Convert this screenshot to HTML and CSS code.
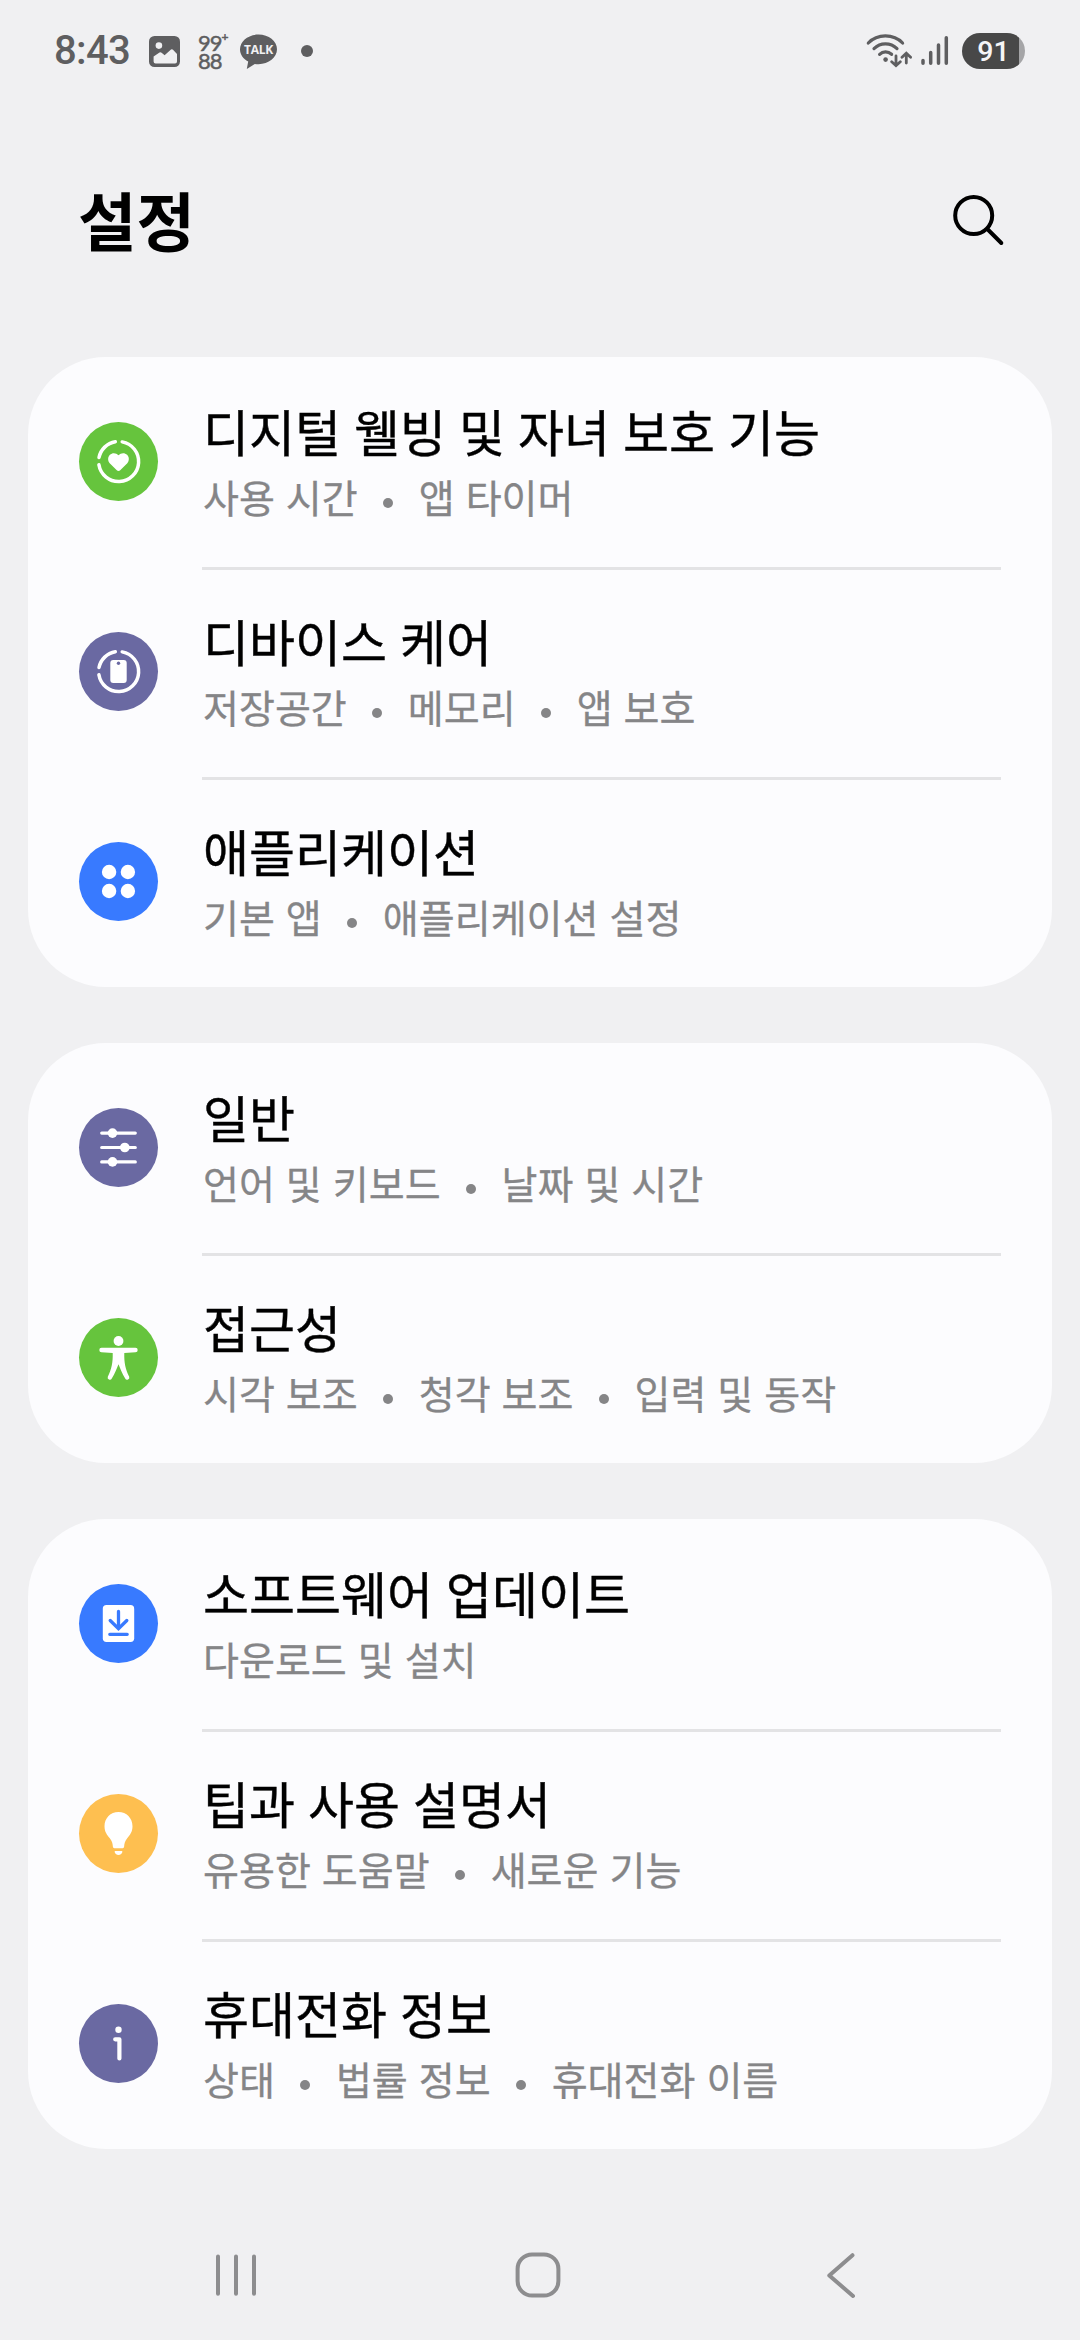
FILE: index.html
```html
<!DOCTYPE html>
<html lang="ko">
<head>
<meta charset="utf-8">
<title>설정</title>
<link rel="stylesheet" href="styles.css">
</head>
<body>
<div class="screen">
  <div class="status">
    <div class="status-left">
      <span class="time">8:43</span>
      <svg class="st-image" viewBox="0 0 31 31" width="31" height="31"><rect width="31" height="31" rx="5.5" fill="#5e5e60"/><circle cx="9.9" cy="9.6" r="3.3" fill="#f0f0f2"/><path d="M4.6 20.5 L10.5 16.4 Q11.6 15.8 12.6 16.7 L15.6 19.3 L22 13.6 Q23 12.8 24 13.7 L28 18 V25.5 Q28 27.6 26 27.6 H6.6 Q4.6 27.6 4.6 25.5Z" fill="#f0f0f2"/></svg>
      <span class="st-count"><span class="count-top"><span>99</span><span class="plus">+</span></span><span>88</span></span>
      <span class="st-talk"><svg viewBox="0 0 37 36" width="37" height="36"><path d="M18.5.5C8.3.5 0 7 0 15.3c0 5.3 3.3 9.7 8.2 12.3L6.8 35l8-5c1.2.1 2.4.2 3.7.2C28.7 30.2 37 23.5 37 15.3S28.7.5 18.5.5Z" fill="#5e5e60"/></svg><span>TALK</span></span>
      <span class="st-dot"></span>
    </div>
    <div class="status-right">
      <svg class="st-wifi" viewBox="866 32 46 38" width="46" height="38" fill="none" stroke="#5e5e60" stroke-width="3.2" stroke-linecap="round"><path d="M868.3 43C873 38.2 879 35.9 885.4 35.9S898 38.2 902.6 43M874 48.6C877.2 45.4 881 43.8 885.4 43.8S893.8 45.4 897 48.6M879.6 54.3C883 51 888 51 891.6 54.3"/><path stroke-width="2.8" d="M896 56V65M891.7 61.7L896 65.7L900.3 61.7M906.300 63V53.5M902 57.2L906.300 53.2L910.600 57.2"/><circle cx="885.6" cy="59.6" r="2.3" fill="#5e5e60" stroke="none"/></svg>
      <svg class="st-signal" viewBox="921 36 28 30" width="28" height="30" stroke="#5e5e60" stroke-width="3.5" stroke-linecap="round"><path d="M923 60.5V63.3M930.7 52.5V63.3M938.5 45V63.3M946.3 37.8V63.3"/></svg>
      <span class="battery">91</span>
    </div>
  </div>

  <header class="header">
    <h1>설정</h1>
    <svg viewBox="950 192 56 56" width="56" height="56" fill="none" stroke="#000" stroke-width="4" stroke-linecap="round"><circle cx="973.7" cy="215.5" r="18.5"/><path d="M987.3 229L1001.3 243"/></svg>
  </header>

  <main class="groups">
    <section class="card">
      <div class="row">
        <svg class="icon green" viewBox="-39.5 -39.5 79 79"><path class="line ring" d="M-19.500-4A20 20 0 0 1-3.200-19.700M3.700-19.600A20 20 0 1 1-19.600 3.300"/><path class="solid" d="M0 9.600C-.7 9.600-1.200 9.300-1.700 8.800L-8.800 1.800C-10.900-.6-10.900-4.500-8.600-6.700-6.200-9-2.400-8.800 0-6.200 2.400-8.800 6.200-9 8.600-6.700 10.900-4.500 10.900-.6 8.800 1.800L1.700 8.800C1.200 9.300.7 9.600 0 9.600Z"/></svg>
        <div class="text"><h2>디지털 웰빙 및 자녀 보호 기능</h2><p><span>사용 시간</span><i></i><span>앱 타이머</span></p></div>
      </div>
      <div class="row">
        <svg class="icon purple" viewBox="-39.5 -39.5 79 79"><path class="line ring" d="M-19.500-4A20 20 0 0 1-3.200-19.700M3.700-19.600A20 20 0 1 1-19.600 3.300"/><rect class="solid" x="-8.200" y="-11.500" width="16.400" height="23" rx="3"/><circle cx="0" cy="-8.200" r="1.700" fill="#6a69a2"/></svg>
        <div class="text"><h2>디바이스 케어</h2><p><span>저장공간</span><i></i><span>메모리</span><i></i><span>앱 보호</span></p></div>
      </div>
      <div class="row">
        <svg class="icon blue" viewBox="-39.5 -39.5 79 79"><g class="solid"><circle cx="-9.4" cy="-9.5" r="7.2"/><circle cx="9.4" cy="-9.5" r="7.2"/><circle cx="-9.4" cy="9.5" r="7.2"/><circle cx="9.4" cy="9.5" r="7.2"/></g></svg>
        <div class="text"><h2>애플리케이션</h2><p><span>기본 앱</span><i></i><span>애플리케이션 설정</span></p></div>
      </div>
    </section>

    <section class="card">
      <div class="row">
        <svg class="icon purple" viewBox="-39.5 -39.5 79 79"><path class="line" d="M-16.800-14.400H16.800M-16.800 0H16.800M-16.800 14.400H16.800"/><g class="solid"><circle cx="-6" cy="-14.4" r="4.8"/><circle cx="6.3" cy="0" r="4.8"/><circle cx="-6" cy="14.4" r="4.8"/></g></svg>
        <div class="text"><h2>일반</h2><p><span>언어 및 키보드</span><i></i><span>날짜 및 시간</span></p></div>
      </div>
      <div class="row">
        <svg class="icon green" viewBox="-39.5 -39.5 79 79"><circle class="solid" cx="0" cy="-16.5" r="4.9"/><path class="solid" d="M-17-9.700H17A2.200 2.200 0 0 1 17-5.300L5.800-4.500C5.500 5 7 12 10.700 19.200A2.200 2.200 0 0 1 6.700 21C3.500 16 1.700 11 0 6.800-1.700 11-3.500 16-6.700 21A2.200 2.200 0 0 1-10.700 19.200C-7 12-5.500 5-5.800-4.500L-17-5.300A2.200 2.200 0 0 1-17-9.700Z"/></svg>
        <div class="text"><h2>접근성</h2><p><span>시각 보조</span><i></i><span>청각 보조</span><i></i><span>입력 및 동작</span></p></div>
      </div>
    </section>

    <section class="card">
      <div class="row">
        <svg class="icon blue" viewBox="-39.5 -39.5 79 79"><rect class="solid" x="-15.7" y="-18.5" width="31.4" height="37" rx="3.7"/><path d="M0-12V5M-8.300-3L0 5.200L8.300-3M-8.700 10.800H8.700" fill="none" stroke="#387aff" stroke-width="3.3" stroke-linecap="round"/></svg>
        <div class="text"><h2>소프트웨어 업데이트</h2><p><span>다운로드 및 설치</span></p></div>
      </div>
      <div class="row">
        <svg class="icon orange" viewBox="-39.5 -39.5 79 79"><path class="solid" d="M0-21.500C-8-21.500-14-15.400-14-7.300-14-1.600-11.500 1.300-8.700 4.700-6.200 7.700-5.900 10-5.600 13.300Q-5.500 14.700-4.200 14.700H4.200Q5.500 14.700 5.600 13.300C5.900 10 6.200 7.700 8.700 4.700 11.500 1.300 14-1.600 14-7.300 14-15.400 8-21.500 0-21.500ZM-3.300 17.400H3.300Q4.400 17.400 3.700 18.900C3 20.500 1.900 21.400 0 21.400S-3 20.500-3.700 18.900Q-4.400 17.400-3.300 17.400Z"/></svg>
        <div class="text"><h2>팁과 사용 설명서</h2><p><span>유용한 도움말</span><i></i><span>새로운 기능</span></p></div>
      </div>
      <div class="row">
        <svg class="icon purple" viewBox="-39.5 -39.5 79 79"><circle class="solid" cx="0" cy="-13.8" r="3.2"/><path class="line info" d="M-3.300-4.200H.9V15"/></svg>
        <div class="text"><h2>휴대전화 정보</h2><p><span>상태</span><i></i><span>법률 정보</span><i></i><span>휴대전화 이름</span></p></div>
      </div>
    </section>
  </main>

  <nav class="nav">
    <svg viewBox="0 0 48 48" width="48" height="48"><path d="M6 5.500V42.800M24 5.500V42.800M42 5.500V42.800"/></svg>
    <svg viewBox="0 0 48 48" width="48" height="48"><rect x="3.600" y="3.400" width="40.800" height="41.200" rx="14.500"/></svg>
    <svg viewBox="0 0 48 48" width="48" height="48"><path d="M36.500 4.200L13.300 24.500L37 45"/></svg>
  </nav>
</div>
</body>
</html>
```
FILE: styles.css
```css
* { box-sizing: border-box; }

body {
  margin: 0;
  background: #f0f0f2;
  font-family: "Noto Sans CJK KR", "Noto Sans", sans-serif;
  color: #000;
}

svg { display: block; flex: none; }

h1, h2, p { margin: 0; }

.screen {
  width: 1080px;
  height: 2340px;
  display: flex;
  flex-direction: column;
  overflow: hidden;
}

/* Status bar */
.status {
  height: 102px;
  padding: 0 55px 0 54px;
  display: flex;
  align-items: center;
  justify-content: space-between;
  color: #5e5e60;
}

.status-left, .status-right { display: flex; align-items: center; }

.time {
  width: 95px;
  font: 500 40px/48px Roboto, sans-serif;
  letter-spacing: -0.7px;
}

.st-count {
  width: 29px;
  margin: 2px 0 0 18px;
  display: flex;
  flex-direction: column;
  font: 400 22px/18px Lato, sans-serif;
  letter-spacing: -1px;
  -webkit-text-stroke: 0.5px #5e5e60;
}

.count-top { display: flex; white-space: nowrap; }
.plus { font-size: 12px; line-height: 6px; }

.st-talk {
  display: grid;
  margin: 2px 0 0 13px;
}

.st-talk svg, .st-talk span { grid-area: 1 / 1; }

.st-talk span {
  padding-top: 8px;
  text-align: center;
  color: #f0f0f2;
  font: 700 12px/15px "Open Sans", sans-serif;
  letter-spacing: -0.3px;
}

.st-dot {
  width: 12px;
  height: 12px;
  margin-left: 24px;
  border-radius: 50%;
  background: #5e5e60;
}

.st-signal { margin-left: 9px; }

.battery {
  width: 63px;
  height: 36px;
  margin-left: 13px;
  border-radius: 18px;
  background: linear-gradient(90deg, #484848 57px, #a5a5a7 57px);
  color: #f5f5f7;
  text-align: center;
  font: 500 28.5px/37px Roboto, sans-serif;
}

/* Title bar */
.header {
  height: 255px;
  padding: 85px 74px 0 78px;
  display: flex;
  align-items: flex-start;
  justify-content: space-between;
}

.header h1 { font-size: 63.5px; line-height: 62px; font-weight: 700; }
.header svg { margin-top: 5px; }

/* Settings groups */
.groups {
  display: flex;
  flex-direction: column;
  gap: 56px;
  padding: 0 28px;
}

.card {
  border-radius: 78px;
  background: #fcfcfe;
}

.row {
  height: 210px;
  padding: 0 51px;
  display: flex;
}

.icon {
  width: 79px;
  height: 79px;
  margin: 65px 44px 0 0;
  border-radius: 50%;
}

.green { background: #66c43d; }
.purple { background: #6a69a2; }
.blue { background: #387aff; }
.orange { background: #febf50; }

.solid { fill: #fff; }
.line { fill: none; stroke: #fff; stroke-width: 3.2; stroke-linecap: round; stroke-linejoin: round; }
.ring { stroke-width: 3.5; }
.info { stroke-width: 4.2; }

.text {
  flex: 1;
  padding: 41px 0 0 1px;
  white-space: nowrap;
}

.row + .row .text {
  border-top: 3px solid #e3e3e5;
  padding-top: 38px;
}

.text h2 {
  font-size: 50px;
  line-height: 64px;
  font-weight: 400;
  word-spacing: -1px;
  -webkit-text-stroke: 0.4px #000;
}

.text p {
  display: flex;
  align-items: center;
  padding-top: 5px;
  font-size: 39.1px;
  line-height: 58px;
  color: #858587;
  -webkit-text-stroke: 0.3px #858587;
}

.text i {
  width: 10px;
  height: 10px;
  margin: 14px 26px 0 25px;
  border-radius: 50%;
  background: #858587;
}

/* Navigation bar */
.nav {
  flex: 1;
  padding: 102px 216px 0 212px;
  display: flex;
  justify-content: space-between;
}

.nav path, .nav rect {
  fill: none;
  stroke: #8d8d8f;
  stroke-width: 4;
  stroke-linecap: round;
  stroke-linejoin: round;
}
```
